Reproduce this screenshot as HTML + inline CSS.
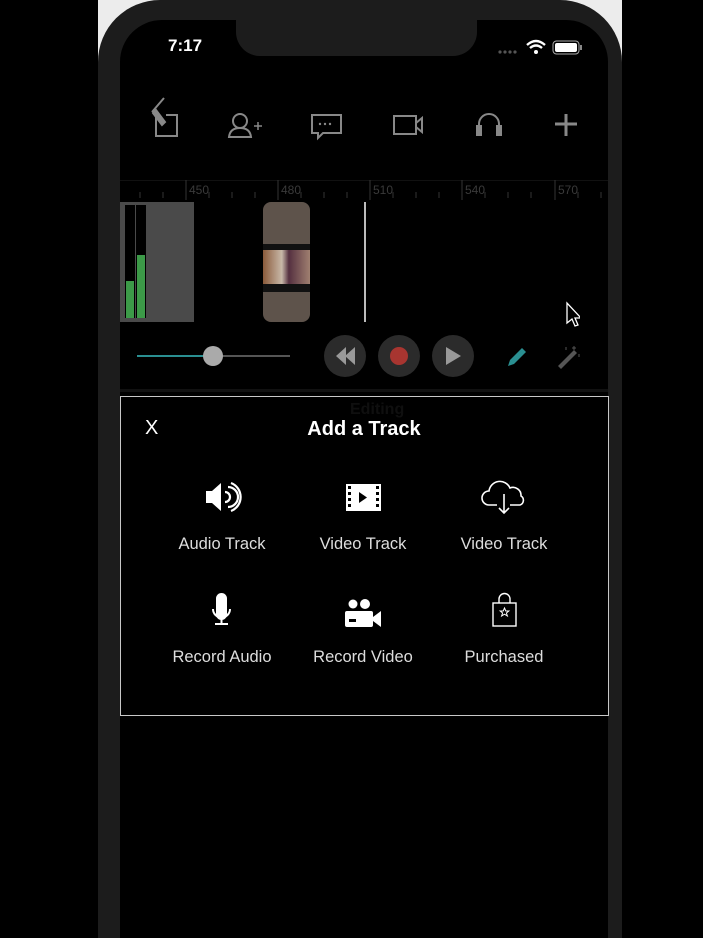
<!DOCTYPE html>
<html><head><meta charset="utf-8"><style>
*{margin:0;padding:0;box-sizing:border-box}
body{width:703px;height:938px;background:#000;position:relative;overflow:hidden;font-family:"Liberation Sans",sans-serif}
.a{position:absolute}
.lbl{position:absolute;color:#ddd;font-size:16.5px;text-align:center;width:140px}
</style></head><body>
<div class="a" style="left:98px;top:0;width:524px;height:80px;background:#ececec"></div>
<div class="a" style="left:98px;top:0;width:524px;height:938px;background:#1c1c1c;border-radius:62px 62px 0 0"></div>
<div class="a" style="left:120px;top:20px;width:488px;height:918px;background:#000;border-radius:42px 42px 0 0"></div>
<div class="a" style="left:236px;top:0;width:241px;height:56px;background:#1c1c1c;border-radius:0 0 24px 24px"></div>
<div class="a" style="left:168px;top:36px;color:#fff;font-size:17px;font-weight:bold">7:17</div>
<svg class="a" style="left:490px;top:36px" width="125" height="22">
<g fill="#555"><circle cx="10" cy="16" r="1.6"/><circle cx="15" cy="16" r="1.6"/><circle cx="20" cy="16" r="1.6"/><circle cx="25" cy="16" r="1.6"/></g>
<path d="M37 9 Q46 1 55 9" stroke="#fff" stroke-width="2.4" fill="none"/><path d="M40 12 Q46 7 52 12" stroke="#fff" stroke-width="2.4" fill="none"/><circle cx="46" cy="16" r="2" fill="#fff"/>
<rect x="63" y="5" width="26" height="13" rx="3.5" fill="none" stroke="#aaa" stroke-width="1"/><rect x="65" y="7" width="22" height="9" rx="2" fill="#fff"/><rect x="90" y="9" width="2" height="5" fill="#888"/>
</svg>
<svg class="a" style="left:120px;top:95px" width="488" height="50" fill="none" stroke="#888" stroke-width="2">
<path d="M36 16 L36 41 L57 41 L57 20 L46 20"/><path d="M44 3 L32 17"/><path d="M33 18 L42 30 L45 27 L36 15 Z" fill="#888"/>
<circle cx="120" cy="26" r="7"/><path d="M109 42 Q110 33 120 33 Q130 33 131 42 Z"/><path d="M134 31 h8 M138 27 v8" stroke-width="1.5"/>
<path d="M192 20 h29 v18 h-18 l-5 5 v-5 h-6 Z"/><g fill="#888" stroke="none"><circle cx="200" cy="29" r="1.2"/><circle cx="205" cy="29" r="1.2"/><circle cx="210" cy="29" r="1.2"/></g>
<rect x="274" y="21" width="22" height="18"/><path d="M296 28 l6 -5 v14 l-6 -5"/>
<path d="M359 38 v-9 a10 10 0 0 1 20 0 v9"/><rect x="357" y="31" width="4" height="9" fill="#888"/><rect x="377" y="31" width="4" height="9" fill="#888"/>
<path d="M446 19 v22 M435 29 h22" stroke-width="3"/>
</svg>
<div class="a" style="left:120px;top:180px;width:488px;height:1px;background:#111"></div>
<svg class="a" style="left:120px;top:180px" width="488" height="22">
<g stroke="#333" stroke-width="1"><path d="M66 0v20M158 0v20M250 0v20M342 0v20M435 0v20"/>
<path d="M20 12v6M43 12v6M89 12v6M112 12v6M135 12v6M181 12v6M204 12v6M227 12v6M273 12v6M296 12v6M319 12v6M365 12v6M388 12v6M411 12v6M458 12v6M481 12v6"/></g>
<g fill="#3a3a3a" font-size="12" font-family="Liberation Sans"><text x="69" y="14">450</text><text x="161" y="14">480</text><text x="253" y="14">510</text><text x="345" y="14">540</text><text x="438" y="14">570</text></g>
</svg>
<div class="a" style="left:120px;top:202px;width:74px;height:120px;background:#4a4a4a"></div>
<div class="a" style="left:125px;top:205px;width:10px;height:113px;background:#000"><div class="a" style="left:1px;bottom:0;width:8px;height:37px;background:#3c9a48"></div></div>
<div class="a" style="left:136px;top:205px;width:10px;height:113px;background:#000"><div class="a" style="left:1px;bottom:0;width:8px;height:63px;background:#3c9a48"></div></div>
<div class="a" style="left:263px;top:202px;width:47px;height:120px;background:#5e534b;border-radius:8px;overflow:hidden">
<div class="a" style="left:0;top:42px;width:47px;height:6px;background:#111"></div>
<div class="a" style="left:0;top:48px;width:47px;height:34px;background:linear-gradient(90deg,#8a5a3a,#c8b8a8 40%,#553040 55%,#a08070)"></div>
<div class="a" style="left:0;top:82px;width:47px;height:8px;background:#111"></div>
</div>
<div class="a" style="left:364px;top:202px;width:2px;height:120px;background:#bbb"></div>
<svg class="a" style="left:560px;top:300px" width="20" height="28"><path d="M7 3 v20 l5 -4 l3 7 l3 -1 l-3 -7 h6 Z" fill="#000" stroke="#fff" stroke-width="1.3"/></svg>
<div class="a" style="left:137px;top:355px;width:76px;height:2px;background:#2a8f91"></div>
<div class="a" style="left:213px;top:355px;width:77px;height:2px;background:#555"></div>
<div class="a" style="left:203px;top:346px;width:20px;height:20px;border-radius:50%;background:#aaa"></div>
<div class="a" style="left:324px;top:335px;width:42px;height:42px;border-radius:50%;background:#2b2b2b"></div>
<div class="a" style="left:378px;top:335px;width:42px;height:42px;border-radius:50%;background:#2b2b2b"></div>
<div class="a" style="left:432px;top:335px;width:42px;height:42px;border-radius:50%;background:#2b2b2b"></div>
<svg class="a" style="left:324px;top:335px" width="160" height="42">
<path d="M12 21 l10 -9 v18 Z M21 21 l10 -9 v18 Z" fill="#999"/>
<circle cx="75" cy="21" r="9" fill="#a83530"/>
<path d="M122 12 l15 9 l-15 9 Z" fill="#999"/>
</svg>
<svg class="a" style="left:500px;top:340px" width="90" height="32">
<path d="M8 26 l2 -6 l12 -12 l4 4 l-12 12 Z" fill="#2a8f91"/>
<path d="M58 26 l16 -16 l3 3 l-16 16 Z" fill="#555"/><path d="M74 6 v4 M72 8 h4 M66 7 v3 M79 14 v3" stroke="#555" stroke-width="1"/>
</svg>
<div class="a" style="left:120px;top:389px;width:488px;height:3px;background:#111"></div>
<div class="a" style="left:120px;top:396px;width:489px;height:320px;border:1.5px solid #c8c8c8;background:#000"></div>
<div class="a" style="left:350px;top:401px;color:#0f0f0f;font-size:16px;font-weight:bold">Editing</div>
<div class="a" style="left:145px;top:417px;color:#fff;font-size:20px">X</div>
<div class="a" style="left:264px;top:418px;width:200px;text-align:center;color:#fff;font-size:20px;font-weight:bold">Add a Track</div>
<svg class="a" style="left:120px;top:470px" width="490" height="160">
<g fill="#fff"><path d="M86 21 h6 l9 -8 v28 l-9 -8 h-6 Z"/></g>
<g fill="none" stroke="#fff" stroke-width="2.2"><path d="M105 22 a5 5 0 0 1 0 10"/><path d="M108 17 a10 10 0 0 1 0 20"/><path d="M111 13 a15 15 0 0 1 0 28"/></g>
<rect x="226" y="14" width="35" height="27" fill="#fff"/>
<g fill="#000"><rect x="228" y="16" width="3" height="3"/><rect x="228" y="22" width="3" height="3"/><rect x="228" y="28" width="3" height="3"/><rect x="228" y="34" width="3" height="3"/><rect x="256" y="16" width="3" height="3"/><rect x="256" y="22" width="3" height="3"/><rect x="256" y="28" width="3" height="3"/><rect x="256" y="34" width="3" height="3"/><path d="M239 22 l8 5.5 l-8 5.5 Z"/></g>
<path d="M377 35 h-8 a7 7 0 0 1 0 -14 a11 11 0 0 1 21 -3 a8 8 0 0 1 11 8 a5 5 0 0 1 -1 9 h-10" fill="none" stroke="#fff" stroke-width="1.6"/>
<path d="M384 24 v19 M379 38 l5 5 l5 -5" fill="none" stroke="#fff" stroke-width="1.6"/>
<rect x="96" y="123" width="11" height="27" rx="5.5" fill="#fff"/>
<path d="M93 139 a8.5 8.5 0 0 0 17 0" fill="none" stroke="#fff" stroke-width="2"/><path d="M101.5 148 v5 M95 154 h13" stroke="#fff" stroke-width="2"/>
<g fill="#fff"><circle cx="233" cy="134" r="4.5"/><circle cx="245" cy="134" r="5"/><rect x="225" y="141" width="28" height="16" rx="2"/><path d="M253 147 l8 -6 v16 l-8 -6 Z"/></g>
<rect x="229" y="149" width="7" height="3" fill="#000"/>
<rect x="373" y="133" width="23" height="23" fill="none" stroke="#fff" stroke-width="1.4"/>
<path d="M379 133 v-4 a5.5 5.5 0 0 1 11 0 v4" fill="none" stroke="#fff" stroke-width="1.4"/>
<path d="M384.5 138 l1.3 3 h3 l-2.4 2 l1 3 l-2.9 -1.8 l-2.9 1.8 l1 -3 l-2.4 -2 h3 Z" fill="none" stroke="#fff" stroke-width="1"/>
</svg>
<div class="lbl" style="left:152px;top:535px">Audio Track</div>
<div class="lbl" style="left:293px;top:535px">Video Track</div>
<div class="lbl" style="left:434px;top:535px">Video Track</div>
<div class="lbl" style="left:152px;top:648px">Record Audio</div>
<div class="lbl" style="left:293px;top:648px">Record Video</div>
<div class="lbl" style="left:434px;top:648px">Purchased</div>
</body></html>
